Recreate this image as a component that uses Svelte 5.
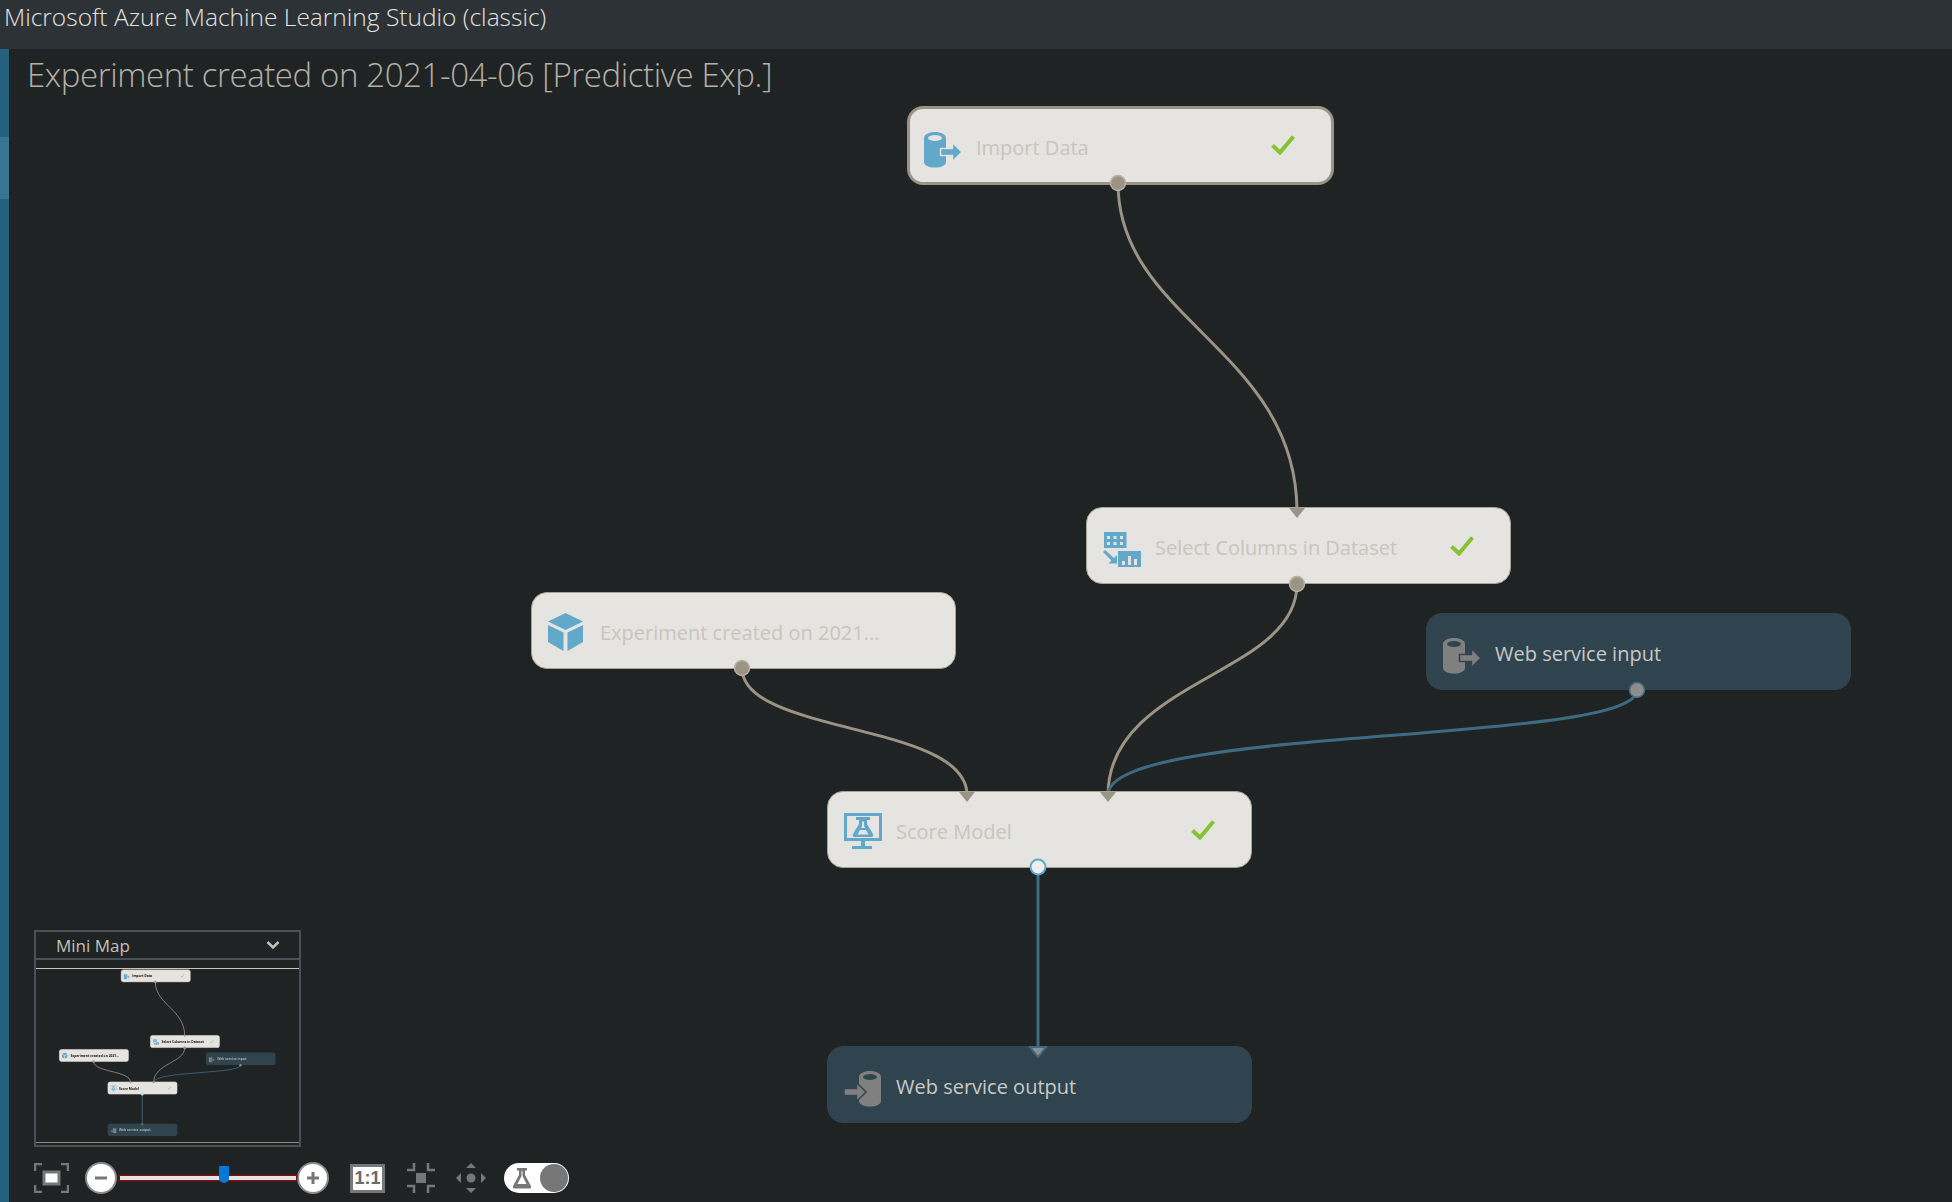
<script lang="ts">
  const nodes = [
    { name: 'Import Data', icon: 'dbin', x: 907, y: 106, done: true, selected: true },
    { name: 'Select Columns in Dataset', icon: 'columns', x: 1086, y: 507, done: true },
    { name: 'Experiment created on 2021...', icon: 'cube', x: 531, y: 592 },
    { name: 'Web service input', icon: 'dbin', x: 1426, y: 613, web: true },
    { name: 'Score Model', icon: 'monitor', x: 827, y: 791, done: true },
    { name: 'Web service output', icon: 'dbout', x: 827, y: 1046, web: true },
  ];

  const wires = [
    { d: 'M1118 183C1118 320 1297 350 1297 512', web: false },
    { d: 'M1297 584C1297 675 1108 680 1108 795', web: false },
    { d: 'M742 668C742 735 967 722 967 795', web: false },
    { d: 'M1637 690C1637 745 1108 725 1108 795', web: true },
    { d: 'M1038 867L1038 1050', web: true },
  ];

  const ports = [
    { x: 1118, y: 183, kind: 'port' },
    { x: 1297, y: 584, kind: 'port' },
    { x: 742, y: 668, kind: 'port' },
    { x: 1637, y: 690, kind: 'port-web' },
    { x: 1038, y: 867, kind: 'port-open' },
  ];

  const inputs = [
    { x: 1297, y: 507, web: false },
    { x: 967, y: 791, web: false },
    { x: 1108, y: 791, web: false },
    { x: 1038, y: 1046, web: true },
  ];
</script>

{#snippet icon(kind)}
  {#if kind === 'dbin'}
    <svg class="ico" width="38" height="36" viewBox="0 0 38 36">
      <path class="fg" d="M0 6C0 2.5 5 0 11 0s11 2.5 11 6v24c0 3.5-5 5.500-11 5.500S0 33.500 0 30z" />
      <ellipse class="hole" cx="11" cy="6" rx="7" ry="3" />
      <path class="fg cut" d="M16.500 16.500h12v-6l9.500 9.500-9.500 9.500v-6h-12z" />
    </svg>
  {:else if kind === 'dbout'}
    <svg class="ico" width="38" height="36" viewBox="0 0 38 36">
      <path class="fg" d="M15 6C15 2.500 20 0 26 0s11 2.500 11 6v24c0 3.500-5 5.500-11 5.500s-11-2-11-5.500z" />
      <ellipse class="hole" cx="26" cy="6" rx="7" ry="3" />
      <path class="fg cut" d="M0 17.500h12.500v-6l9.500 9.500-9.500 9.500v-6H0z" />
    </svg>
  {:else if kind === 'columns'}
    <svg class="ico" width="38" height="36" viewBox="0 0 38 36">
      <rect class="fg" x="1" y="0" width="22.500" height="16" />
      <path class="hole" d="M4 4h3v3H4zM10.500 4h3v3h-3zM17 4h3v3h-3zM4 10h3v3H4zM10.500 10h3v3h-3zM17 10h3v3h-3z" />
      <rect class="fg" x="15" y="19" width="23" height="16" />
      <path class="hole" d="M19 29h3v4h-3zM25 24h3v9h-3zM31 27h3v6h-3z" />
      <path class="fg" d="M2 18l-2 2 8.500 8.500-3 3H14V23l-3 3z" />
    </svg>
  {:else if kind === 'cube'}
    <svg class="ico" width="36" height="38" viewBox="0 0 36 38">
      <path class="fg" d="M17.500 0L35 8.500 17.500 17 0 8.500z" />
      <path class="fg" d="M0 12l15.500 7.500V38L0 29z" />
      <path class="fg" d="M35 12l-15.500 7.500V38L35 29z" />
    </svg>
  {:else if kind === 'monitor'}
    <svg class="ico" width="38" height="38" viewBox="0 0 38 38">
      <path class="fg" d="M0 0h38v28H0zM3 3v22h32V3z" fill-rule="evenodd" />
      <path class="fg" d="M12 4h14v3h-3v4l6 10c.8 1.500.2 3-1.500 3h-17c-1.700 0-2.300-1.500-1.500-3l6-10V7h-3z" />
      <path class="hole" d="M18 8.500h2v4l1 2.500h-4l1-2.500zM16 17h6l2.500 4.500h-11z" />
      <path class="fg" d="M17 28h4v5h7v3H8v-3h9z" />
    </svg>
  {/if}
{/snippet}

{#snippet graph()}
  <svg class="wires" width="1952" height="1202" viewBox="0 0 1952 1202">
    {#each wires as w}
      <path class="wire" class:web={w.web} d={w.d} />
    {/each}
  </svg>
  {#each nodes as n}
    <div class="node" class:web={n.web} class:selected={n.selected} style="left: {n.x}px; top: {n.y}px">
      <span class="ico-slot {n.icon}">{@render icon(n.icon)}</span>
      <span class="label">{n.name}</span>
      {#if n.done}
        <svg class="check" width="24" height="20" viewBox="0 0 24 20">
          <path d="M1.500 10.500L9 17.500 22.500 1.500" />
        </svg>
      {/if}
    </div>
  {/each}
  <svg class="wires top" width="1952" height="1202" viewBox="0 0 1952 1202">
    {#each inputs as p}
      <path class="input" class:web={p.web} d="M{p.x - 8} {p.y + 1}h16l-8 10z" />
    {/each}
    {#each ports as p}
      <circle class={p.kind} cx={p.x} cy={p.y} r="7.500" />
    {/each}
  </svg>
{/snippet}

<div class="shell">
  <header class="topbar">Microsoft Azure Machine Learning Studio (classic)</header>

  <div class="body">
    <div class="stripe">
      <div class="stripe-lit"></div>
    </div>
    <h1 class="title">Experiment created on 2021-04-06 [Predictive Exp.]</h1>
  </div>

  <div class="graph">{@render graph()}</div>

  <section class="minimap">
    <div class="mini-head">
      <span>Mini Map</span>
      <svg width="14" height="10" viewBox="0 0 14 10"><path d="M1.500 2L7 7.500 12.500 2" /></svg>
    </div>
    <div class="mini-view">
      <div class="mini-graph">{@render graph()}</div>
    </div>
  </section>

  <div class="toolbar">
    <svg class="tool" width="35" height="30" viewBox="0 0 35 30">
      <path class="corner" d="M1 8V1h7M27 1h7v7M34 22v7h-7M8 29H1v-7" />
      <rect x="10" y="9" width="15" height="12" fill="#fff" stroke="#777" stroke-width="3" />
    </svg>
    <button class="round minus" aria-label="Zoom out">
      <svg width="16" height="16" viewBox="0 0 16 16"><path d="M2 8h12" /></svg>
    </button>
    <div class="slider"><span class="thumb"></span></div>
    <button class="round plus" aria-label="Zoom in">
      <svg width="16" height="16" viewBox="0 0 16 16"><path d="M2 8h12M8 2v12" /></svg>
    </button>
    <span class="actual">1:1</span>
    <svg class="tool fit" width="28" height="30" viewBox="0 0 28 30">
      <path class="corner" d="M7 0v7H0M21 0v7h7M21 30v-7h7M7 30v-7H0" />
      <rect x="9" y="10" width="10" height="10" fill="#777" />
    </svg>
    <svg class="tool pan" width="30" height="30" viewBox="0 0 30 30">
      <path fill="#777" d="M15 0l5 5H10zM15 30l-5-5h10zM0 15l5-5v10zM30 15l-5 5V10z" />
      <circle cx="15" cy="15" r="4.500" fill="#777" />
    </svg>
    <div class="toggle">
      <svg width="20" height="22" viewBox="0 0 20 22">
        <path d="M5 1h10v2.500h-2V8l6 11c.6 1.500 0 2.500-1.500 2.500h-15C1 21.500.4 20.500 1 19L7 8V3.500H5z" fill="#777" />
        <path d="M9.500 4h1v5l4 8h-9l4-8z" fill="#fff" />
      </svg>
      <span class="knob"></span>
    </div>
  </div>
</div>

<style>
  :global(body) {
    background: #1f2324;
    overflow: hidden;
  }

  .shell {
    position: relative;
    display: flex;
    flex-direction: column;
    height: 1202px;
    font-family: "Open Sans", "Noto Sans", sans-serif;
    overflow: hidden;
  }

  .topbar {
    height: 49px;
    flex: none;
    padding: 0 0 0 4px;
    background: #2d3236;
    color: #e2e2e0;
    font-size: 24.500px;
    font-weight: 300;
    line-height: 34px;
  }

  .body {
    display: flex;
    flex: 1;
  }

  .stripe {
    width: 9px;
    flex: none;
    background: #25607c;
    padding-top: 88px;
  }

  .stripe-lit {
    height: 62px;
    background: #3a7693;
  }

  .title {
    margin: 0;
    padding: 2px 0 0 18px;
    color: #b5b0a8;
    font-size: 33px;
    font-weight: 300;
    letter-spacing: -0.4px;
    line-height: 48px;
    white-space: nowrap;
  }

  .graph {
    position: absolute;
    inset: 0;
  }

  .wires {
    position: absolute;
    left: 0;
    top: 0;
    pointer-events: none;
  }

  .wire {
    fill: none;
    stroke: #9b9384;
    stroke-width: 3;
  }

  .wire.web {
    stroke: #3f6b82;
  }

  .input {
    fill: #9b9384;
  }

  .input.web {
    fill: #8a8f91;
    stroke: #3f6b82;
    stroke-width: 2;
  }

  .port {
    fill: #9b9384;
    stroke: #b8b2a6;
    stroke-width: 1.500;
  }

  .port-web {
    fill: #8d8d8d;
    stroke: #3f6b82;
    stroke-width: 1.500;
  }

  .port-open {
    fill: #eeeeea;
    stroke: #62a8cb;
    stroke-width: 2;
  }

  .node {
    position: absolute;
    box-sizing: border-box;
    display: flex;
    align-items: center;
    width: 425px;
    height: 77px;
    padding-left: 16px;
    background: #e5e4e0;
    border: 1px solid #a9a396;
    border-radius: 16px;
    color: #c8c5bf;
    font-size: 20px;
  }

  .node.selected {
    width: 427px;
    height: 79px;
    padding-left: 14px;
    border: 3px solid #9b9384;
  }

  .node.web {
    background: #2f444f;
    border-color: #2f444f;
    color: #c9c9c6;
  }

  .ico-slot {
    display: flex;
    width: 52px;
    flex: none;
    margin-top: 9px;
  }

  .ico-slot.monitor {
    margin-top: 5px;
  }

  .ico-slot.cube {
    margin-top: 3px;
  }

  .fg {
    fill: #62a8cb;
  }

  .hole {
    fill: #e5e4e0;
  }

  .cut {
    stroke: #e5e4e0;
    stroke-width: 1.500;
  }

  .web .fg {
    fill: #808080;
  }

  .web .hole {
    fill: #2f444f;
  }

  .web .cut {
    stroke: #2f444f;
  }

  .label {
    padding-top: 3px;
    white-space: nowrap;
  }

  .check {
    position: absolute;
    left: 363px;
    top: 28px;
  }

  .selected .check {
    left: 361px;
    top: 26px;
  }

  .check path {
    fill: none;
    stroke: #86c232;
    stroke-width: 4;
  }

  .minimap {
    position: absolute;
    left: 34px;
    top: 930px;
    box-sizing: border-box;
    display: flex;
    flex-direction: column;
    width: 267px;
    height: 217px;
    background: #1f2324;
    border: 2px solid #4b5056;
  }

  .mini-head {
    display: flex;
    align-items: center;
    justify-content: space-between;
    box-sizing: border-box;
    height: 28px;
    flex: none;
    padding: 0 19px 0 20px;
    border-bottom: 2px solid #4b5056;
    color: #c4c0b9;
    font-size: 17px;
  }

  .mini-head path {
    fill: none;
    stroke: #c4c0b9;
    stroke-width: 2.500;
  }

  .mini-view {
    position: relative;
    flex: 1;
    margin-top: 8px;
    margin-bottom: 2px;
    border-top: 1px solid #c9c5bb;
    border-bottom: 1px solid #8f8b83;
    overflow: hidden;
  }

  .mini-graph {
    position: absolute;
    left: -64px;
    top: -17.400px;
    width: 1952px;
    height: 1202px;
    transform: scale(0.164);
    transform-origin: 0 0;
  }

  .mini-graph .node {
    color: #111;
    font-weight: 700;
  }

  .mini-graph .node.web {
    color: #a9b0b3;
  }

  .mini-graph .wire {
    stroke-width: 5;
  }

  .toolbar {
    position: absolute;
    left: 34px;
    top: 1163px;
    display: flex;
    align-items: center;
    height: 30px;
  }

  .tool {
    flex: none;
  }

  .corner {
    fill: none;
    stroke: #777;
    stroke-width: 2.500;
  }

  .round {
    display: flex;
    align-items: center;
    justify-content: center;
    width: 28px;
    height: 28px;
    padding: 0;
    flex: none;
    background: #fff;
    border: 0;
    border-radius: 50%;
    box-shadow: 0 0 0 2px #8a8a8a;
  }

  .round path {
    fill: none;
    stroke: #777;
    stroke-width: 3;
  }

  .minus {
    margin-left: 18px;
  }

  .plus {
    margin-left: 3px;
  }

  .slider {
    position: relative;
    width: 176px;
    height: 4px;
    margin-left: 5px;
    flex: none;
    background: #e4e4e4;
    box-shadow: 0 0 0 1.500px #7a1015;
  }

  .thumb {
    position: absolute;
    left: 99px;
    top: -10px;
    width: 10px;
    height: 17px;
    background: #0078d7;
    border-radius: 0 0 5px 5px;
  }

  .actual {
    box-sizing: border-box;
    width: 35px;
    height: 29px;
    margin-left: 23px;
    flex: none;
    background: #fff;
    border: 3px solid #777;
    color: #6a6a6a;
    font-family: "Liberation Sans", sans-serif;
    font-size: 18px;
    font-weight: 700;
    line-height: 23px;
    text-align: center;
  }

  .fit {
    margin-left: 22px;
  }

  .pan {
    margin-left: 21px;
  }

  .toggle {
    display: flex;
    align-items: center;
    justify-content: space-between;
    box-sizing: border-box;
    width: 65px;
    height: 30px;
    margin-left: 18px;
    flex: none;
    padding: 0 1px 0 8px;
    background: #fff;
    border-radius: 15px;
  }

  .knob {
    width: 28px;
    height: 28px;
    background: #777;
    border-radius: 50%;
  }
</style>
